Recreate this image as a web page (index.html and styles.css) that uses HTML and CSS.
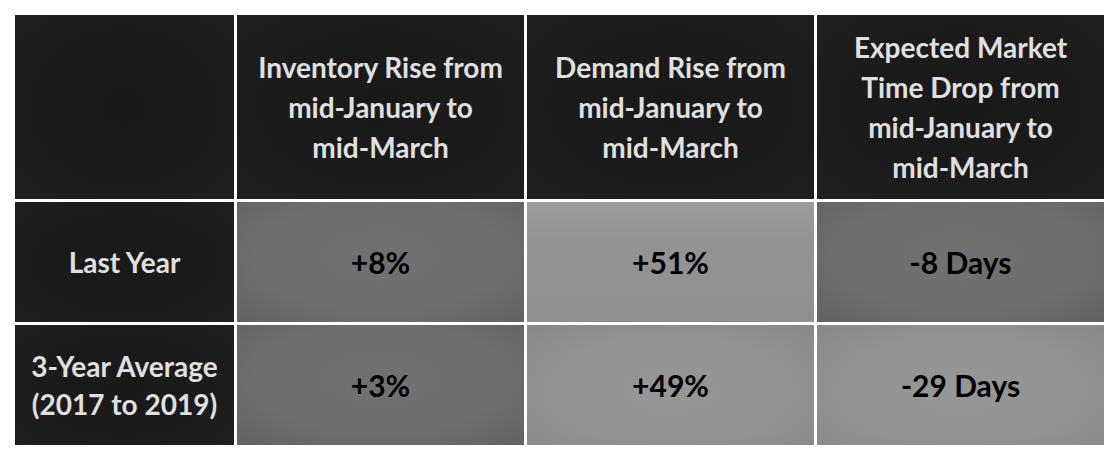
FILE: index.html
```html
<!DOCTYPE html>
<html lang="en">
<head>
<meta charset="utf-8">
<title>Market comparison</title>
<link rel="stylesheet" href="styles.css">
</head>
<body>
<div class="table">
  <div class="cell head"></div>
  <div class="cell head">Inventory Rise from<br>mid-January to<br>mid-March</div>
  <div class="cell head">Demand Rise from<br>mid-January to<br>mid-March</div>
  <div class="cell head">Expected Market<br>Time Drop from<br>mid-January to<br>mid-March</div>

  <div class="cell label">Last Year</div>
  <div class="cell val dark">+8%</div>
  <div class="cell val light top">+51%</div>
  <div class="cell val dark">-8 Days</div>

  <div class="cell label">3-Year Average<br>(2017 to 2019)</div>
  <div class="cell val dark">+3%</div>
  <div class="cell val light">+49%</div>
  <div class="cell val light">-29 Days</div>
</div>
</body>
</html>
```

FILE: styles.css
```css
html, body {
  margin: 0;
  padding: 0;
  background: #ffffff;
}

body {
  font-family: "Lato", "Liberation Sans", sans-serif;
  font-weight: 700;
}

.table {
  display: grid;
  grid-template-columns: 219px repeat(3, 287px);
  grid-template-rows: 184px 120px 120px;
  gap: 3px;
  padding: 15px 0 0 15px;
}

.cell {
  display: flex;
  align-items: center;
  justify-content: center;
  text-align: center;
}

.head,
.label {
  background: radial-gradient(ellipse at 50% 50%, #191919 0%, #1b1b1b 55%, #1f1f1f 100%);
  color: #e0e0e0;
  font-size: 28px;
  line-height: 40px;
}

.label {
  line-height: 38px;
}

.val {
  color: #000000;
  font-size: 30px;
}

.dark {
  background: radial-gradient(ellipse at 50% 45%, #717171 0%, #6e6e6e 60%, #626262 100%);
}

.light {
  background: radial-gradient(ellipse at 50% 55%, #979797 0%, #919191 60%, #888888 100%);
}

.light.top {
  background: linear-gradient(180deg, #9b9b9b 0%, #939393 35%, #8f8f8f 100%);
}
```
